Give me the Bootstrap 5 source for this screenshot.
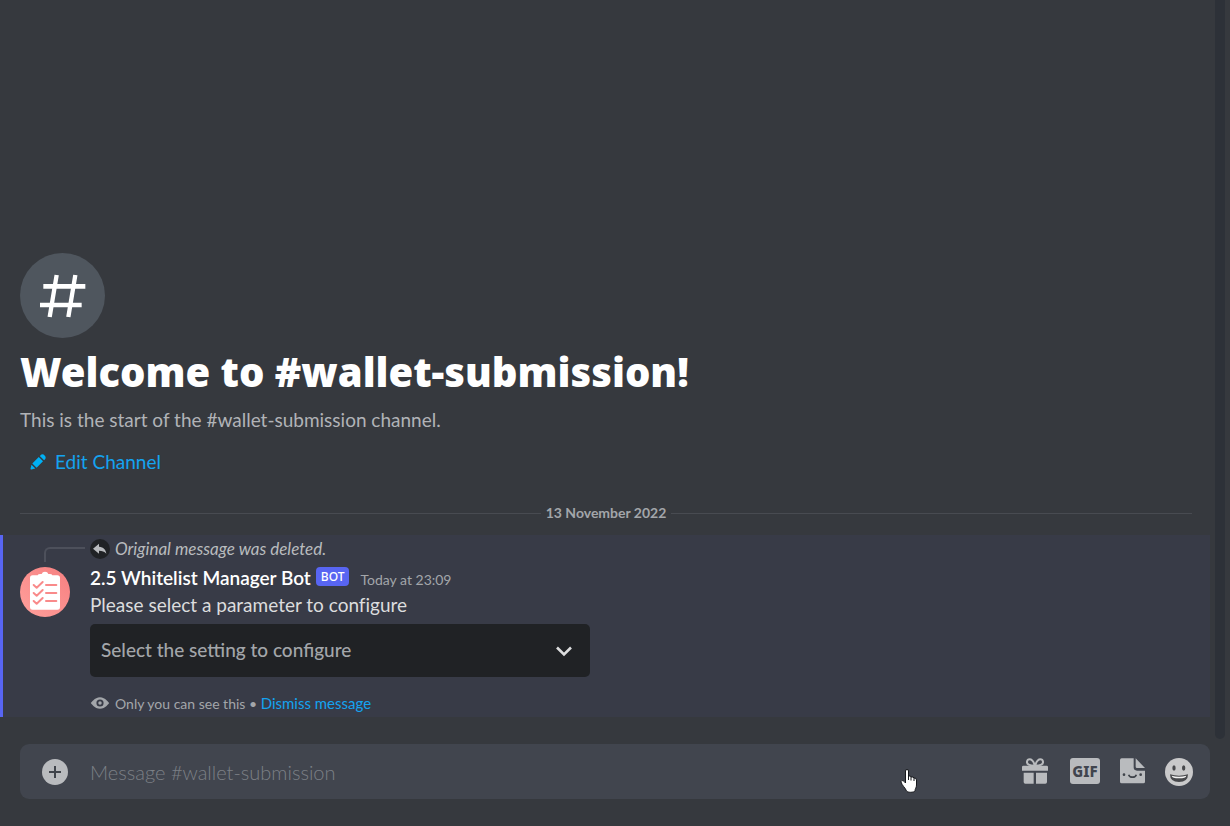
<!DOCTYPE html>
<html lang="en">
<head>
<meta charset="utf-8">
<meta name="viewport" content="width=device-width, initial-scale=1">
<title>#wallet-submission</title>
<link href="https://cdn.jsdelivr.net/npm/bootstrap@5.3.0/dist/css/bootstrap.min.css" rel="stylesheet">
<style>
:root{--chat:#36393e;--composer:#41454e;--icon:#b9bbbe;--link:#14a3f0;--muted:#a3a6aa}
body{background:var(--chat);color:#dcddde;font-family:Lato,"Noto Sans",sans-serif;font-size:19px;line-height:26px;font-variant-ligatures:none}
svg{display:block;flex-shrink:0}
a{color:var(--link);text-decoration:none}
.chat-log{padding-bottom:27px;min-height:0}
.scroll-thumb{top:0;right:5px;bottom:5px;width:10px;background:#2d3138;border-radius:0 0 5px 5px}
.welcome{padding:0 20px}
.welcome h1{font:900 40px/50px "Noto Sans",sans-serif;color:#fff;margin:9px 0 10px}
.welcome p{color:#b1b3b7;margin-bottom:16px}
.hash-disc{background:#4f565e;width:85px}
.edit-channel{color:var(--link);gap:7px;padding:0 8px;font-size:19px;line-height:26px;border:0}
.edit-channel:hover{color:var(--link);text-decoration:underline}
.day-divider{margin:28px 38px 12px 20px;gap:5px;font-size:14px;line-height:20px;font-weight:700;color:var(--muted)}
.day-divider hr{margin:0;border-top:1px solid #484b51;opacity:1}
.message{margin-right:20px;padding:4px 20px 4px 17px;background:#383b47;border-left:3px solid #5865f2}
.reply-row{height:20px;gap:5px;margin-bottom:6px;font-size:17px;line-height:20px;color:#b9bbbe}
.reply-spine{width:41px;height:15px;margin:8px 0 0 24px;border:solid #4d505b;border-width:2px 0 0 2px;border-top-left-radius:6px}
.message-body{gap:20px}
.avatar-pic{margin-top:2px}
.author{font-size:19px;line-height:26px;font-weight:600;color:#fff;margin:0}
.bot-tag{background:#5865f2;color:#fff;font:500 12px/19px "Noto Sans",sans-serif;padding:0 5px;border-radius:4px;margin:2px 11px 0 5px}
.stamp{font-size:14px;line-height:20px;color:var(--muted)}
.message-text{margin:1px 0 6px}
.setting-select{max-width:500px;height:53px;padding:0 48px 0 11px;border:0;border-radius:5px;background-color:#202225;color:#a3a6aa;font-size:19px;font-weight:500;background-position:right 16px center;background-size:20px;
background-image:url("data:image/svg+xml,%3Csvg xmlns='http://www.w3.org/2000/svg' viewBox='0 0 20 20'%3E%3Cpath fill='none' stroke='%23dcddde' stroke-width='2.6' d='M3 6.5l7 7 7-7'/%3E%3C/svg%3E")}
.only-you{height:20px;gap:5px;margin-top:16px;font-size:14px;line-height:20px;color:var(--muted)}
.only-you a{font-size:15px}
.composer{margin:0 20px 27px;height:55px;padding:0 17px 0 22px;gap:22px;border-radius:9px;background:var(--composer)}
.composer input{background:none;border:0;color:#dcddde;font-size:20px;font-weight:300;padding:0;min-width:0}
.composer input:focus{background:none;box-shadow:none;color:#dcddde}
.composer input::placeholder{color:#7c8086;opacity:1}
.composer .btn{padding:0;border:0;border-radius:3px}
.composer-tools{gap:20px}
.composer .gif-btn{width:30px;height:26px;background:var(--icon);color:var(--composer);font:800 15px/26px "Noto Sans",sans-serif}
.pointer{right:292px;top:25px}
</style>
</head>
<body class="vh-100 d-flex flex-column overflow-hidden">
<main class="chat-log position-relative flex-grow-1 d-flex flex-column justify-content-end">
  <div class="scroll-thumb position-absolute"></div>
  <header class="welcome">
    <div class="hash-disc rounded-circle">
      <svg width="85" height="85" viewBox="60 38 255 255" fill="none" stroke="#fff" stroke-linecap="butt"><path stroke-width="13" d="M170 104l-21 126M226 104l-21 126"/><path stroke-width="14" d="M130 138h126M120 194h125"/></svg>
    </div>
    <h1>Welcome to #wallet-submission!</h1>
    <p>This is the start of the #wallet-submission channel.</p>
    <button type="button" class="btn edit-channel d-flex align-items-center">
      <svg width="20" height="20" viewBox="0 0 24 24" fill="#00b0f4"><path d="M19.3 9.83l.64-.65a3.62 3.62 0 0 0-5.12-5.12l-.65.65 5.13 5.12zM12.9 5.98l-7.72 7.71 5.13 5.12 7.71-7.71-5.12-5.12zM4.12 20.97l4.64-1.16-4.57-4.57-1.16 4.64a.88.88 0 0 0 1.09 1.09z"/></svg>
      Edit Channel
    </button>
  </header>

  <div class="day-divider d-flex align-items-center">
    <hr class="flex-grow-1"><span>13 November 2022</span><hr class="flex-grow-1">
  </div>

  <article class="message">
    <div class="reply-row d-flex align-items-start">
      <div class="reply-spine"></div>
      <svg width="20" height="20" viewBox="0 0 60 60"><circle cx="30" cy="30" r="30" fill="#202225"/><path fill="#b9bbbe" d="M27 14v9c14 1 20 9 22 21-6-7-12-9-22-9v9L9 29z"/></svg>
      <em>Original message was deleted.</em>
    </div>
    <div class="message-body d-flex align-items-start">
      <svg class="avatar-pic" width="50" height="50" viewBox="0 0 150 150" role="img" aria-label="Bot avatar">
        <defs><linearGradient id="coral" x1="1" y1="0" x2="0" y2="1"><stop offset="0" stop-color="#f67f80"/><stop offset="1" stop-color="#ffa09c"/></linearGradient></defs>
        <circle cx="75" cy="75" r="75" fill="url(#coral)"/>
        <path fill="#fff" d="M38 25h15q1-4 8-4h4q2-7 10-7t10 7h4q7 0 8 4h15q8 0 8 8v87q0 8-8 8H38q-8 0-8-8V33q0-8 8-8z"/>
        <g fill="none" stroke="#f98a8a" stroke-width="6" stroke-linecap="round" stroke-linejoin="round"><path d="M41 54l9 8 18-17M41 78l9 8 18-17M41 102l9 8 18-17M78 54h31M78 78h31M78 102h31"/></g>
      </svg>
      <div class="flex-grow-1">
        <div class="d-flex align-items-baseline">
          <h2 class="author">2.5 Whitelist Manager Bot</h2>
          <span class="bot-tag align-self-start">BOT</span>
          <time class="stamp">Today at 23:09</time>
        </div>
        <p class="message-text">Please select a parameter to configure</p>
        <select class="form-select setting-select" aria-label="Setting to configure"><option>Select the setting to configure</option></select>
        <div class="only-you d-flex align-items-center">
          <svg width="20" height="20" viewBox="0 0 24 24" fill="#a3a6aa"><path fill-rule="evenodd" d="M12 5C5.65 5 1 12 1 12s4.65 7 11 7 11-7 11-7-4.65-7-11-7zm0 11.300a4.300 4.300 0 1 1 0-8.600 4.300 4.300 0 0 1 0 8.600z"/><circle cx="12" cy="12" r="2.100"/></svg>
          <div>Only you can see this • <a href="#">Dismiss message</a></div>
        </div>
      </div>
    </div>
  </article>
</main>

<form class="composer position-relative d-flex align-items-center">
  <button type="button" class="btn" aria-label="Add attachment">
    <svg width="26" height="26" viewBox="0 0 26 26"><circle cx="13" cy="13" r="13" fill="#b9bbbe"/><path fill="none" stroke="#40444b" stroke-width="2" d="M13 7v12M7 13h12"/></svg>
  </button>
  <input type="text" class="form-control flex-grow-1" placeholder="Message #wallet-submission" aria-label="Message #wallet-submission">
  <div class="composer-tools d-flex align-items-start">
    <button type="button" class="btn" aria-label="Send a gift">
      <svg width="28" height="26" viewBox="66 67 84 78" fill="#b9bbbe"><path fill="none" stroke="#b9bbbe" stroke-width="6" d="M105 90c-4-12-9-19-16-19-9 0-11 12-3 16 5 3 12 3 19 3zM105 90c4-12 9-19 16-19 9 0 11 12 3 16-5 3-12 3-19 3z"/><path d="M70 90h70q4 0 4 4v11H66V94q0-4 4-4zM71 111h30v33H76q-5 0-5-5zM108 111h33v28q0 5-5 5h-28z"/></svg>
    </button>
    <button type="button" class="btn gif-btn">GIF</button>
    <button type="button" class="btn" aria-label="Stickers">
      <svg width="25" height="26" viewBox="360 65 75 78"><path fill="#b9bbbe" d="M365 66h36v27q0 10 10 10h24v33q0 5-5 5h-65q-5 0-5-5V71q0-5 5-5zM407 66l28 29h-24q-4 0-4-4z"/><g fill="#40444b"><circle cx="372" cy="115" r="4"/><circle cx="422" cy="115" r="4"/></g><path fill="none" stroke="#40444b" stroke-width="5" d="M386 115c3 10 20 10 23 0"/></svg>
    </button>
    <button type="button" class="btn" aria-label="Emoji">
      <svg width="28" height="28" viewBox="0 0 84 84"><circle cx="42" cy="42" r="42" fill="#c9c9ca"/><g fill="#47484b"><ellipse cx="27" cy="30" rx="5" ry="8"/><ellipse cx="56" cy="30" rx="5" ry="8"/><path d="M15 49q27 8 54 0 0 23-27 23T15 49z"/></g><path fill="#f2f2f2" d="M20 53q22 6 44 0-1 8-22 8t-22-8z"/></svg>
    </button>
  </div>
  <svg class="pointer position-absolute" width="18" height="25" viewBox="0 0 18 25"><path fill="#fff" stroke="#16181c" d="M5.500 2q0-1.500 1.500-1.500T8.500 2v5q2.500-.5 2.500 1 2.500-.5 3 1 2.500-.2 2.500 2v5c0 3-1.500 3.500-1.500 6-1 1.700-8 1.700-8.500 0C5.500 19 2 16.500 1 13c0-2 2.500-2 4.500 1z"/><path fill="none" stroke="#16181c" d="M8.500 7v4M11 8v3.500M14 9v3"/></svg>
</form>
<script src="https://cdn.jsdelivr.net/npm/bootstrap@5.3.0/dist/js/bootstrap.bundle.min.js"></script>
</body>
</html>
